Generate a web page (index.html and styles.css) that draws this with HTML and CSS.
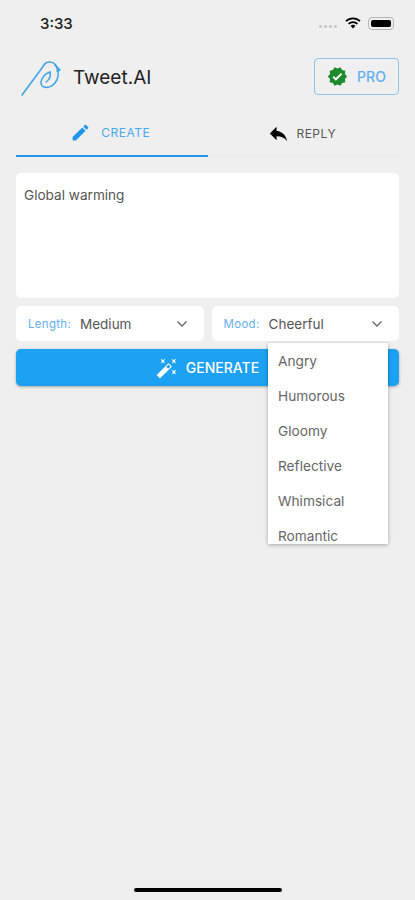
FILE: index.html
```html
<!DOCTYPE html>
<html>
<head>
<meta charset="UTF-8">
<title>Tweet.AI</title>
<link rel="stylesheet" href="styles.css">
</head>
<body>
<div class="app">

	<div class="status">
		<span class="time">3:33</span>
		<div class="status-icons">
			<span class="signal"><i></i><i></i><i></i><i></i></span>
			<svg class="wifi" width="16" height="12" viewBox="0 0 16 12">
				<path d="M1 4.2 A10 10 0 0 1 15 4.2" fill="none" stroke="#000" stroke-width="1.8"/>
				<path d="M3.6 6.8 A6.4 6.4 0 0 1 12.4 6.8" fill="none" stroke="#000" stroke-width="1.8"/>
				<path d="M8 11.5 L5.6 8.9 A3.4 3.4 0 0 1 10.4 8.9 Z" fill="#000"/>
			</svg>
			<span class="battery"><span class="battery-fill"></span></span>
		</div>
	</div>

	<div class="header">
		<div class="brand">
			<svg class="logo" width="50" height="45" viewBox="0 0 50 45" fill="none" stroke="#3aa2e8" stroke-width="1.5" stroke-linecap="round" stroke-linejoin="round">
				<path d="M7 40 L27 13 C29 9 31 7 34 7 C38 7 41 9 42 13 C44 18 43 24 40 28 C37 32 32 33 29 32 C26 31 25 28 27 24 C29 20 32 18 35 17"/>
				<path d="M40 10 L45 15 L42 16"/>
				<path d="M35 17 C36 21 34 25 31 27"/>
			</svg>
			<span class="brand-name">Tweet.AI</span>
		</div>
		<div class="pro">
			<svg width="21" height="21" viewBox="0 0 24 24">
				<path fill="#1e8a2e" d="M23 12l-2.44-2.79.34-3.69-3.61-.82-1.89-3.2L12 2.96 8.6 1.5 6.71 4.69 3.1 5.5l.34 3.7L1 12l2.44 2.79-.34 3.7 3.61.82L8.6 22.5l3.4-1.47 3.4 1.46 1.89-3.19 3.61-.82-.34-3.69L23 12z"/>
				<path fill="#fff" d="M10.09 16.72l-3.8-3.81 1.48-1.48 2.32 2.33 5.85-5.87 1.48 1.48z"/>
			</svg>
			<span>PRO</span>
		</div>
	</div>

	<div class="tabs">
		<div class="tab active">
			<svg width="21" height="21" viewBox="0 0 24 24"><path fill="#2196e8" d="M3 17.25V21h3.75L17.81 9.94l-3.75-3.75L3 17.25zM20.71 7.04a1 1 0 0 0 0-1.41l-2.34-2.34a1 1 0 0 0-1.41 0l-1.83 1.83 3.75 3.75 1.83-1.83z"/></svg>
			<span>CREATE</span>
		</div>
		<div class="tab">
			<svg width="23" height="23" viewBox="0 0 24 24"><path fill="#000" d="M10 9V5l-7 7 7 7v-4.1c5 0 8.5 1.6 11 5.1-1-5-4-10-11-11z"/></svg>
			<span>REPLY</span>
		</div>
	</div>

	<div class="topic">Global warming</div>

	<div class="selects">
		<div class="select">
			<span class="select-label">Length:</span>
			<span class="select-value">Medium</span>
			<svg class="chevron" width="12" height="8" viewBox="0 0 12 8"><path d="M1.5 1.5 L6 6 L10.5 1.5" fill="none" stroke="#666" stroke-width="1.4"/></svg>
		</div>
		<div class="select">
			<span class="select-label">Mood:</span>
			<span class="select-value">Cheerful</span>
			<svg class="chevron" width="12" height="8" viewBox="0 0 12 8"><path d="M1.5 1.5 L6 6 L10.5 1.5" fill="none" stroke="#666" stroke-width="1.4"/></svg>
		</div>
	</div>

	<div class="generate">
		<svg width="22" height="22" viewBox="0 0 24 24"><path fill="#fff" d="M7.5 5.6L10 7 8.6 4.5 10 2 7.5 3.4 5 2l1.4 2.5L5 7zm12 9.8L17 14l1.4 2.5L17 19l2.5-1.4L22 19l-1.4-2.5L22 14zM22 2l-2.5 1.4L17 2l1.4 2.5L17 7l2.5-1.4L22 7l-1.4-2.5zm-7.63 5.29a1 1 0 0 0-1.41 0L1.29 18.96a1 1 0 0 0 0 1.41l2.34 2.34a1 1 0 0 0 1.41 0L16.7 11.05a1 1 0 0 0 0-1.41l-2.33-2.35zm-1.03 5.49l-2.12-2.12 2.44-2.44 2.12 2.12-2.44 2.44z"/></svg>
		<span>GENERATE</span>
	</div>

	<div class="menu">
		<div class="menu-item">Angry</div>
		<div class="menu-item">Humorous</div>
		<div class="menu-item">Gloomy</div>
		<div class="menu-item">Reflective</div>
		<div class="menu-item">Whimsical</div>
		<div class="menu-item">Romantic</div>
	</div>

	<div class="home-bar"></div>
</div>
</body>
</html>
```

FILE: styles.css
```css
* {
	box-sizing: border-box;
}

html, body {
	margin: 0;
	padding: 0;
}

body {
	background: #efefef;
	font-family: "Inter", "Liberation Sans", sans-serif;
	color: #333;
}

.app {
	position: relative;
	height: 900px;
	overflow: hidden;
	display: flex;
	flex-direction: column;
}

/* status bar */
.status {
	height: 46px;
	padding: 0 21px 0 40px;
	display: flex;
	align-items: center;
	justify-content: space-between;
}

.time {
	font-size: 15px;
	font-weight: 500;
	color: #222;
}

.status-icons {
	display: flex;
	align-items: center;
	gap: 7px;
}

.signal {
	display: flex;
	gap: 2px;
	margin-top: 6px;
	margin-right: 1px;
}

.signal i {
	width: 3px;
	height: 3px;
	border-radius: 50%;
	background: #c4c4c4;
}

.battery {
	width: 26px;
	height: 13px;
	padding: 2px;
	border: 1px solid #b5b5b5;
	border-radius: 4px;
	display: block;
}

.battery-fill {
	display: block;
	height: 100%;
	background: #000;
	border-radius: 2px;
}

/* header */
.header {
	height: 64px;
	padding: 9px 16px 0 15px;
	display: flex;
	align-items: flex-start;
	justify-content: space-between;
}

.brand {
	display: flex;
	align-items: center;
	gap: 8px;
}

.brand-name {
	font-size: 19px;
	color: #222;
}

.pro {
	width: 85px;
	height: 37px;
	margin-top: 3px;
	border: 1px solid #90c4f0;
	border-radius: 4px;
	display: flex;
	align-items: center;
	justify-content: center;
	gap: 9px;
	color: #64aef0;
	font-size: 14px;
	font-weight: 500;
}

/* tabs */
.tabs {
	margin: 0 16px;
	display: flex;
	height: 47px;
}

.tab {
	flex: 1;
	padding-right: 3px;
	display: flex;
	align-items: center;
	justify-content: center;
	gap: 6px;
	font-size: 12px;
	letter-spacing: .5px;
	color: #555;
	border-bottom: 1px solid #e8e8e8;
}

.tab.active {
	gap: 10px;
	color: #4aa8ee;
	border-bottom: 2px solid #2196e8;
}

.topic {
	margin: 16px 16px 0;
	height: 125px;
	padding: 14px 8px;
	background: #fff;
	border-radius: 5px;
	font-size: 13.6px;
	color: #555;
}

.selects {
	margin: 8px 16px 0;
	display: flex;
	gap: 8px;
}

.select {
	flex: 1;
	height: 35px;
	padding: 0 16px 0 12px;
	background: #fff;
	border-radius: 5px;
	display: flex;
	align-items: center;
	gap: 9px;
}

.select-label {
	font-size: 11.5px;
	letter-spacing: .3px;
	color: #64aef0;
}

.select-value {
	flex: 1;
	font-size: 13.5px;
	color: #555;
}

.generate {
	margin: 8px 16px 0;
	height: 37px;
	background: #1da1f2;
	border-radius: 5px;
	box-shadow: 0 1px 3px rgba(0, 0, 0, .3);
	color: #fff;
	font-size: 14px;
	font-weight: 500;
	display: flex;
	align-items: center;
	justify-content: center;
	gap: 8px;
}

/* mood dropdown, lies over the button */
.menu {
	position: absolute;
	left: 268px;
	top: 343px;
	width: 120px;
	height: 201px;
	overflow: hidden;
	background: #fff;
	box-shadow: 0 1px 4px rgba(0, 0, 0, .3);
}

.menu-item {
	height: 35px;
	padding-left: 10px;
	display: flex;
	align-items: center;
	font-size: 13.7px;
	color: #666;
}

.home-bar {
	position: absolute;
	left: 134px;
	bottom: 8px;
	width: 148px;
	height: 4px;
	border-radius: 2px;
	background: #000;
}
```
